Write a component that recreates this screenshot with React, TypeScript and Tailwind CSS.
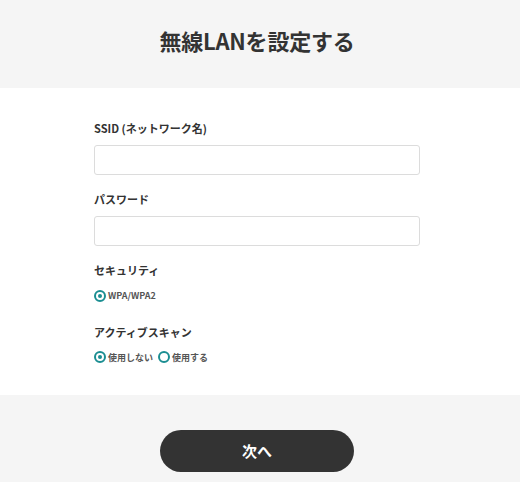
import React, { useState } from 'react';

const Radio = ({ checked, label, onClick }: { checked: boolean; label: string; onClick: () => void }) => (
    <label className="flex items-center gap-[2px] cursor-pointer" onClick={onClick}>
        <span className="flex h-[12px] w-[12px] items-center justify-center rounded-full border-2 border-[#1b8e92]">
            {checked && <span className="h-[4px] w-[4px] rounded-full bg-[#1b8e92]" />}
        </span>
        <span className="text-[9px] font-bold text-[#555]">{label}</span>
    </label>
);

export default function App() {
    const [scan, setScan] = useState(0);

    return (
        <div className="min-h-[482px] w-full bg-[#f5f5f5] font-['Noto_Sans_CJK_JP','Noto_Sans',sans-serif] text-[#333]">
            <header className="flex h-[88px] items-center justify-center pb-[8px] pr-[6px]">
                <h1 className="text-[22px] font-bold tracking-[-0.2px]">無線LANを設定する</h1>
            </header>

            <main className="h-[307px] bg-white px-[94px] pt-[32px]">
                <div className="flex w-[326px] flex-col">
                    <p className="text-[11px] font-bold leading-[16px]">SSID (ネットワーク名)</p>
                    <input className="mt-[9px] h-[30px] rounded-[3px] border border-[#dcdcdc] px-2 text-[12px] outline-none" />

                    <p className="mt-[16px] text-[11px] font-bold leading-[16px]">パスワード</p>
                    <input type="password" className="mt-[9px] h-[30px] rounded-[3px] border border-[#dcdcdc] px-2 text-[12px] outline-none" />

                    <p className="mt-[16px] text-[11px] font-bold leading-[16px]">セキュリティ</p>
                    <div className="mt-[11px] flex">
                        <Radio checked label="WPA/WPA2" onClick={() => {}} />
                    </div>

                    <p className="mt-[21px] text-[11px] font-bold leading-[16px]">アクティブスキャン</p>
                    <div className="mt-[11px] flex gap-[5px]">
                        <Radio checked={scan === 0} label="使用しない" onClick={() => setScan(0)} />
                        <Radio checked={scan === 1} label="使用する" onClick={() => setScan(1)} />
                    </div>
                </div>
            </main>

            <footer className="flex justify-center pr-[6px] pt-[35px]">
                <button className="h-[42px] w-[194px] rounded-full bg-[#333] text-[15px] font-bold text-white">
                    次へ
                </button>
            </footer>
        </div>
    );
}
